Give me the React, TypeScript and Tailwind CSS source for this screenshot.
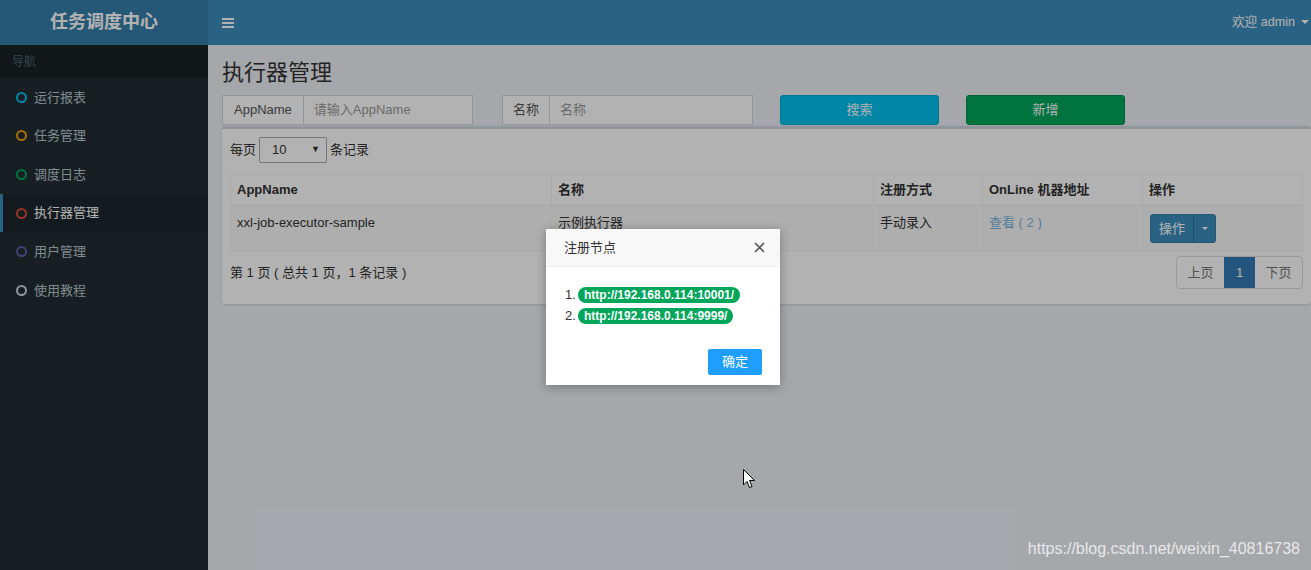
import React from "react";

const menu = [
  { label: "运行报表", color: "border-[#00c0ef]" },
  { label: "任务管理", color: "border-[#f39c12]" },
  { label: "调度日志", color: "border-[#00a65a]" },
  { label: "执行器管理", color: "border-[#dd4b39]", active: true },
  { label: "用户管理", color: "border-[#605ca8]" },
  { label: "使用教程", color: "border-[#d2d6de]" },
];

const columns = [
  { title: "AppName", w: "w-[320px]" },
  { title: "名称", w: "w-[322px]" },
  { title: "注册方式", w: "w-[109px]" },
  { title: "OnLine 机器地址", w: "w-[160px]" },
  { title: "操作", w: "flex-1" },
];

const App = () => {
  return (
    <div className="relative w-[1311px] h-[570px] overflow-hidden text-[13px] text-[#333] font-['Liberation_Sans','Noto_Sans_CJK_SC',sans-serif]">
      {/* Header */}
      <div className="flex h-[45px]">
        <div className="w-[208px] bg-[#367fa9] flex items-center justify-center text-white text-[18px] font-bold">
          任务调度中心
        </div>
        <div className="flex-1 bg-[#3c8dbc] flex items-center justify-between pl-[14px] pr-[2px] text-white">
          <svg width="12" height="10" viewBox="0 0 12 10">
            <rect x="0" y="0" width="12" height="2" fill="white" />
            <rect x="0" y="4" width="12" height="2" fill="white" />
            <rect x="0" y="8" width="12" height="2" fill="white" />
          </svg>
          <div className="flex items-center gap-[6px] text-[12.6px]">
            <span>欢迎 admin</span>
            <span className="w-0 h-0 border-x-[4px] border-x-transparent border-t-[4px] border-t-white" />
          </div>
        </div>
      </div>

      <div className="flex h-[525px]">
        {/* Sidebar */}
        <aside className="w-[208px] bg-[#222d32]">
          <div className="h-[33px] bg-[#1a2226] text-[#4b646f] text-[12px] flex items-center pl-[12px]">
            导航
          </div>
          {menu.map((m) => (
            <div
              key={m.label}
              className={`h-[38.6px] flex items-center gap-[7px] border-l-[3px] pl-[13px] ${
                m.active
                  ? "bg-[#1e282c] border-l-[#3c8dbc] text-white"
                  : "border-l-transparent text-[#b8c7ce]"
              }`}
            >
              <span className={`w-[11px] h-[11px] rounded-full border-2 ${m.color}`} />
              <span className="text-[13px]">{m.label}</span>
            </div>
          ))}
        </aside>

        {/* Content */}
        <main className="flex-1 bg-[#ecf0f5] pl-[14px] pt-[12px]">
          <h1 className="text-[22px] leading-[32px] text-[#333]">执行器管理</h1>
          <div className="flex items-center h-[30px] mt-[6px]">
            <div className="flex h-[30px] w-[251px] border border-[#d2d6de] bg-white">
              <span className="px-[11px] flex items-center border-r border-[#d2d6de] text-[#555]">AppName</span>
              <span className="px-[10px] flex items-center text-[#999]">请输入AppName</span>
            </div>
            <div className="flex h-[30px] w-[251px] ml-[29px] border border-[#d2d6de] bg-white">
              <span className="px-[10px] flex items-center border-r border-[#d2d6de] text-[#555]">名称</span>
              <span className="px-[10px] flex items-center text-[#999]">名称</span>
            </div>
            <button className="ml-[27px] w-[159px] h-[30px] rounded-[3px] bg-[#00c0ef] border border-[#00acd6] text-white">
              搜索
            </button>
            <button className="ml-[27px] w-[159px] h-[30px] rounded-[3px] bg-[#00a65a] border border-[#008d4c] text-white">
              新增
            </button>
          </div>

          {/* Box */}
          <div className="mt-[1px] h-[178px] bg-white border-t-[3px] border-[#d2d6de] rounded-[3px] shadow-sm pl-[8px] pt-[8px] pr-[8px]">
            <div className="flex items-center gap-[3px] h-[26px]">
              <span>每页</span>
              <div className="w-[68px] h-[26px] border border-[#aaa] rounded-[2px] flex items-center justify-between px-[12px] pr-[6px]">
                <span>10</span>
                <span className="text-[9px]">▼</span>
              </div>
              <span>条记录</span>
            </div>

            <div className="mt-[11px] border border-[#f4f4f4]">
              <div className="flex h-[31px] font-bold border-b-2 border-[#f4f4f4]">
                {columns.map((c, i) => (
                  <div key={c.title} className={`${c.w} ${i ? "border-l border-[#f4f4f4]" : ""} px-[6px] flex items-center`}>
                    {c.title}
                  </div>
                ))}
              </div>
              <div className="flex h-[45px] bg-[#f9f9f9]">
                <div className="w-[320px] px-[6px] pt-[7px]">xxl-job-executor-sample</div>
                <div className="w-[322px] px-[6px] pt-[7px] border-l border-[#f4f4f4]">示例执行器</div>
                <div className="w-[109px] px-[6px] pt-[7px] border-l border-[#f4f4f4]">手动录入</div>
                <div className="w-[160px] px-[6px] pt-[7px] border-l border-[#f4f4f4] text-[#7fb6dc]">查看 ( 2 )</div>
                <div className="flex-1 px-[7px] pt-[8px] border-l border-[#f4f4f4]">
                  <div className="flex h-[29px] w-[66px] rounded-[3px] overflow-hidden border border-[#367fa9] bg-[#3c8dbc] text-white">
                    <span className="w-[43px] flex items-center justify-center border-r border-[#2f6f96]">操作</span>
                    <span className="flex-1 flex items-center justify-center">
                      <span className="w-0 h-0 border-x-[3px] border-x-transparent border-t-[3px] border-t-white" />
                    </span>
                  </div>
                </div>
              </div>
            </div>

            <div className="flex items-center justify-between mt-[4px]">
              <span>第 1 页 ( 总共 1 页，1 条记录 )</span>
              <div className="flex h-[33px] border border-[#ddd] rounded-[4px] overflow-hidden text-[#777]">
                <span className="w-[47px] flex items-center justify-center">上页</span>
                <span className="w-[31px] flex items-center justify-center bg-[#337ab7] text-white">1</span>
                <span className="w-[47px] flex items-center justify-center">下页</span>
              </div>
            </div>
          </div>
        </main>
      </div>

      {/* Backdrop */}
      <div className="absolute inset-0 bg-black/30" />

      {/* Modal */}
      <div className="absolute left-[546px] top-[229px] w-[234px] h-[156px] bg-white shadow-[0_2px_10px_rgba(0,0,0,0.3)] text-[#333]">
        <div className="h-[38px] bg-[#f8f8f8] border-b border-[#eee] flex items-center justify-between pl-[18px] pr-[15px]">
          <span className="text-[13px]">注册节点</span>
          <svg width="11" height="11" viewBox="0 0 11 11">
            <path d="M1 1 L10 10 M10 1 L1 10" stroke="#555" strokeWidth="1.6" />
          </svg>
        </div>
        <div className="pt-[17px] pl-[19px] text-[13px]">
          <div className="flex items-center h-[21px]">
            <span className="w-[13px]">1.</span>
            <span className="h-[16px] px-[6px] rounded-full bg-[#00a65a] text-white font-bold text-[12px] flex items-center">
              http://192.168.0.114:10001/
            </span>
          </div>
          <div className="flex items-center h-[21px]">
            <span className="w-[13px]">2.</span>
            <span className="h-[16px] px-[6px] rounded-full bg-[#00a65a] text-white font-bold text-[12px] flex items-center">
              http://192.168.0.114:9999/
            </span>
          </div>
        </div>
        <div className="flex justify-end pr-[18px] mt-[23px]">
          <button className="w-[54px] h-[26px] rounded-[2px] bg-[#1e9fff] text-white text-[13px]">确定</button>
        </div>
      </div>

      {/* Cursor */}
      <svg className="absolute left-[743px] top-[469px]" width="13" height="20" viewBox="0 0 13 20">
        <path d="M0.5 0.5 L0.5 16 L4 12.5 L6.5 18.5 L9 17.5 L6.5 11.5 L11.5 11.5 Z" fill="white" stroke="black" strokeWidth="1" />
      </svg>

      {/* Watermark */}
      <div className="absolute right-[11px] bottom-[9px] text-[16px] text-white/75">
        https://blog.csdn.net/weixin_40816738
      </div>
    </div>
  );
};

export default App;
